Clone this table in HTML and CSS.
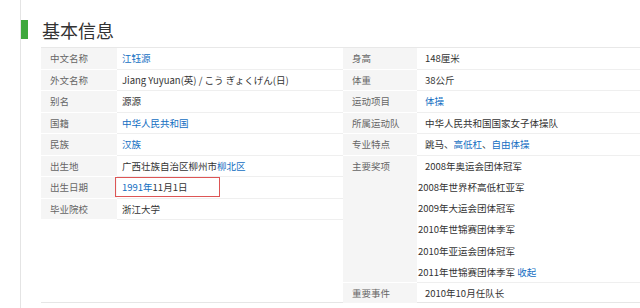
FILE: index.html
```html
<!DOCTYPE html>
<html lang="zh-CN">
<head>
<meta charset="utf-8">
<title>基本信息</title>
<link rel="stylesheet" href="styles.css">
</head>
<body>
<div class="panel">
  <h2 class="title"><span class="bar"></span><span class="title-text">基本信息</span></h2>
  <div class="info">
    <dl class="col col-left">
      <div class="row"><dt>中文名称</dt><dd><a href="#">江钰源</a></dd></div>
      <div class="row"><dt>外文名称</dt><dd>Jiang Yuyuan(英) / こう ぎょくげん(日)</dd></div>
      <div class="row"><dt>别名</dt><dd>源源</dd></div>
      <div class="row"><dt>国籍</dt><dd><a href="#">中华人民共和国</a></dd></div>
      <div class="row"><dt>民族</dt><dd><a href="#">汉族</a></dd></div>
      <div class="row"><dt>出生地</dt><dd>广西壮族自治区柳州市<a href="#">柳北区</a></dd></div>
      <div class="row"><dt>出生日期</dt><dd class="marked"><a href="#">1991年</a>11月1日<span class="mark-box"></span></dd></div>
      <div class="row"><dt>毕业院校</dt><dd>浙江大学</dd></div>
    </dl>
    <dl class="col col-right">
      <div class="row"><dt>身高</dt><dd>148厘米</dd></div>
      <div class="row"><dt>体重</dt><dd>38公斤</dd></div>
      <div class="row"><dt>运动项目</dt><dd><a href="#">体操</a></dd></div>
      <div class="row"><dt>所属运动队</dt><dd>中华人民共和国国家女子体操队</dd></div>
      <div class="row"><dt>专业特点</dt><dd>跳马、<a href="#">高低杠</a>、<a href="#">自由体操</a></dd></div>
      <div class="row row-awards"><dt>主要奖项</dt>
        <dd class="awards">
          <div class="award first">2008年奥运会团体冠军</div>
          <div class="award">2008年世界杯高低杠亚军</div>
          <div class="award">2009年大运会团体冠军</div>
          <div class="award">2010年世锦赛团体季军</div>
          <div class="award">2010年亚运会团体冠军</div>
          <div class="award">2011年世锦赛团体季军 <a href="#">收起</a></div>
        </dd>
      </div>
      <div class="row row-last"><dt>重要事件</dt><dd>2010年10月任队长</dd></div>
    </dl>
  </div>
</div>
</body>
</html>
```
FILE: styles.css
```css
html, body {
  margin: 0;
  padding: 0;
  background: #fff;
}
body {
  width: 640px;
  height: 308px;
  overflow: hidden;
  font-family: "Noto Sans CJK SC", "Noto Sans", sans-serif;
  font-size: 9.5px;
  color: #333;
}
a {
  color: #136ec2;
  text-decoration: none;
}
.panel {
  margin-left: 20px;
  border-left: 1px solid #e4e4e4;
  height: 308px;
  box-sizing: border-box;
}
.title {
  margin: 0;
  padding-top: 20px;
  display: flex;
  align-items: stretch;
  height: 19px;
  line-height: 19px;
  font-size: 18px;
  font-weight: normal;
  color: #333;
}
.bar {
  width: 7px;
  background: #3ea83c;
}
.title-text {
  margin-left: 14px;
  margin-top: 1px;
}
.info {
  margin: 8px 0 0 20px;
  border-top: 1px solid #e8e8e8;
  border-bottom: 1px solid #e6e6e6;
  height: 256px;
  display: flex;
  box-sizing: border-box;
}
.col {
  margin: 0;
  display: flex;
  flex-direction: column;
}
.col-left {
  width: 302px;
}
.col-right {
  flex: 1;
}
.row {
  display: flex;
  height: 21.5px;
  line-height: 21.5px;
}
dt {
  background: #f5f5f5;
  color: #666;
  padding-left: 9px;
  box-sizing: border-box;
  border-bottom: 1px solid #fff;
  white-space: nowrap;
}
dd {
  margin: 0;
  flex: 1;
  box-sizing: border-box;
  border-bottom: 1px solid #efefef;
  white-space: nowrap;
}
.col-left dt {
  width: 76px;
}
.col-left dd {
  padding-left: 5px;
}
.col-right dt {
  width: 74px;
}
.col-right dd {
  padding-left: 8px;
}
.row-awards {
  height: 127.5px;
  line-height: 21.25px;
}
.row-awards dt {
  line-height: 21.25px;
}
.col-right .awards {
  padding-left: 1px;
}
.award {
  height: 21.25px;
}
.award.first {
  padding-left: 7px;
}
.row-last {
  flex: 1;
  height: auto;
  line-height: 20px;
}
.row-last dt, .row-last dd {
  border-bottom: none;
}
.marked {
  position: relative;
}
.mark-box {
  position: absolute;
  left: -2px;
  top: 0;
  width: 105px;
  height: 20px;
  box-sizing: border-box;
  border: 1.5px solid #dd5555;
  pointer-events: none;
}
```
